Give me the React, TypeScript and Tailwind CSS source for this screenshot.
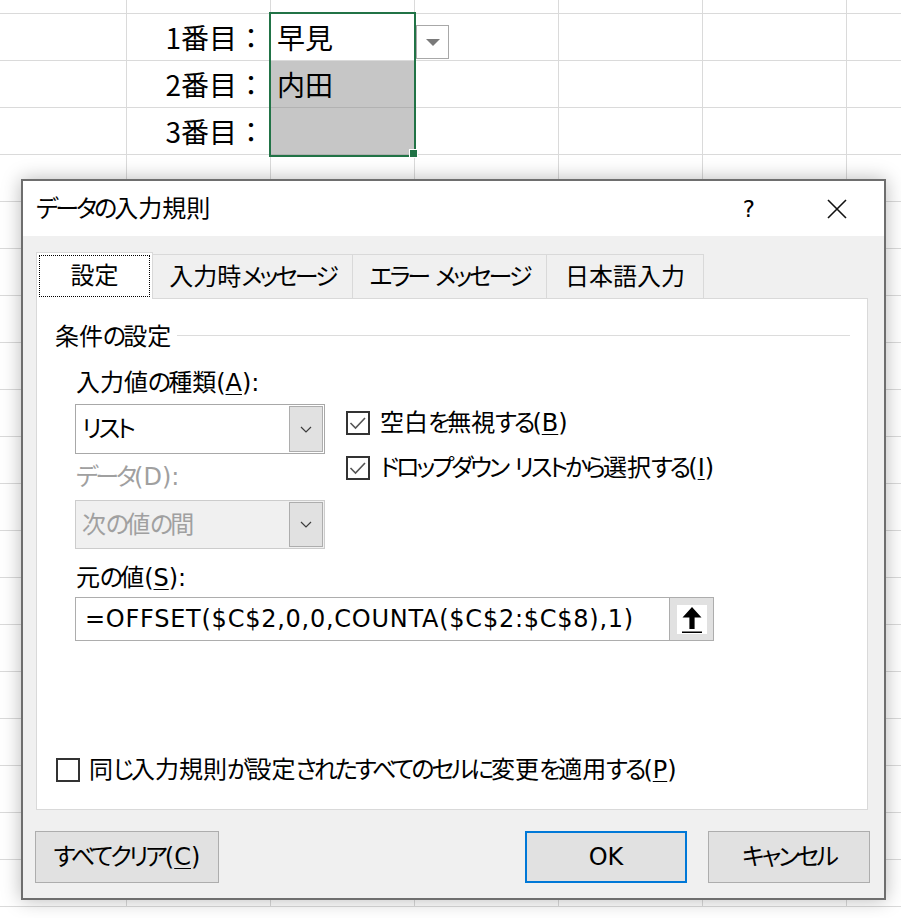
import React from "react";

function J({ t }: { t: string }) {
  const parts = t.split(/([\u3041-\u30ff]+| )/);
  return (
    <>
      {parts.map((p, i) =>
        p === " " ? (
          <span key={i} className="inline-block w-[7px]" />
        ) : /[\u3041-\u30ff]/.test(p) ? (
          <span key={i} className="tracking-[-3px]">
            {p}
          </span>
        ) : (
          <React.Fragment key={i}>{p}</React.Fragment>
        )
      )}
    </>
  );
}

function U({ c }: { c: string }) {
  return <span className="underline underline-offset-[3px] decoration-1">{c}</span>;
}

function Chevron() {
  return (
    <svg width="12" height="7" viewBox="0 0 12 7">
      <path d="M1 1 L6 6 L11 1" fill="none" stroke="#3c3c3c" strokeWidth="1.2" />
    </svg>
  );
}

function CheckBox({ checked }: { checked: boolean }) {
  return (
    <div className="w-[24px] h-[24px] shrink-0 border-2 border-[#333333] bg-white flex items-center justify-center">
      {checked && (
        <svg width="20" height="20" viewBox="0 0 20 20">
          <path d="M2.5 10 L7.5 15 L17 5" fill="none" stroke="#555555" strokeWidth="1.6" />
        </svg>
      )}
    </div>
  );
}

function EmptyCells() {
  return (
    <>
      <div className="w-[144px] shrink-0 border-r border-b border-[#dadada]" />
      <div className="w-[144px] shrink-0 border-r border-b border-[#dadada]" />
      <div className="w-[144px] shrink-0 border-r border-b border-[#dadada]" />
      <div className="w-[144px] shrink-0 border-r border-b border-[#dadada]" />
    </>
  );
}

function SheetRow({ label, value, gray }: { label?: string; value?: string; gray?: boolean }) {
  return (
    <div className="flex h-[47px] shrink-0">
      <div className="w-[127px] shrink-0 border-r border-b border-[#dadada]" />
      <div className="w-[144px] shrink-0 border-r border-b border-[#dadada] flex items-center justify-end pr-[5px] text-[28px] text-black">
        {label}
      </div>
      {gray ? (
        <div className="w-[144px] shrink-0 border-r border-b border-r-[#dadada] border-b-[#b2b2b2] bg-[#c6c6c6] flex items-center pl-[6px] text-[28px] text-black">
          {value}
        </div>
      ) : (
        <div className="w-[144px] shrink-0 border-r border-b border-[#dadada] flex items-center pl-[6px] text-[28px] text-black">
          {value}
        </div>
      )}
      <EmptyCells />
    </div>
  );
}

export default function App() {
  const rows = [];
  for (let i = 4; i <= 19; i++) rows.push(<SheetRow key={i} />);
  return (
    <div className="relative w-[901px] h-[918px] overflow-hidden bg-white font-['Noto_Sans_CJK_JP',sans-serif]">
      {/* spreadsheet */}
      <div className="flex flex-col">
        <div className="flex h-[14px] shrink-0">
          <div className="w-[127px] shrink-0 border-r border-b border-[#dadada]" />
          <div className="w-[144px] shrink-0 border-r border-b border-[#dadada]" />
          <div className="w-[144px] shrink-0 border-r border-b border-[#dadada]" />
          <EmptyCells />
        </div>
        <SheetRow label="1番目：" value="早見" />
        <SheetRow label="2番目：" value="内田" gray />
        <SheetRow label="3番目：" gray />
        {rows}
      </div>

      {/* selection */}
      <div className="absolute left-[269px] top-[12px] w-[147px] h-[145px] border-2 border-[#217346]" />
      <div className="absolute left-[409px] top-[149px] w-[9px] h-[9px] bg-[#217346] border border-white" />
      {/* in-cell dropdown */}
      <div className="absolute left-[416px] top-[25px] w-[33px] h-[34px] border border-[#a8a8a8] bg-white flex items-center justify-center">
        <svg width="14" height="7" viewBox="0 0 14 7">
          <path d="M0 0 L14 0 L7 7 Z" fill="#7a7a7a" />
        </svg>
      </div>

      {/* dialog */}
      <div className="absolute left-[21px] top-[179px] w-[865px] h-[721px] border-2 border-[#6e6e6e] bg-[#f0f0f0] shadow-[0_0_18px_rgba(0,0,0,0.28)] flex flex-col text-black text-[24px] font-['DejaVu_Sans','Noto_Sans_CJK_JP',sans-serif] [font-feature-settings:'palt']">
        {/* title bar */}
        <div className="h-[55px] shrink-0 bg-white flex items-center pl-[13px] pr-[37px]">
          <span className="leading-[28px]">
            <J t="データの入力規則" />
          </span>
          <span className="ml-auto leading-[28px] text-[23px]">?</span>
          <svg className="ml-[72px]" width="20" height="20" viewBox="0 0 20 20">
            <path d="M1 1 L19 19 M19 1 L1 19" stroke="#111" strokeWidth="1.6" />
          </svg>
        </div>

        {/* body */}
        <div className="flex flex-col pl-[13px] pr-[16px] pt-[16px]">
          {/* tabs */}
          <div className="flex items-end h-[46px]">
            <div className="relative z-10 -mb-[1px] w-[117px] h-[47px] bg-white border-l border-t border-r border-[#d9d9d9] p-[2px]">
              <div className="w-full h-full border border-dotted border-black flex items-center justify-center leading-[28px]">
                設定
              </div>
            </div>
            <div className="w-[200px] h-[44px] border-t border-r border-[#d9d9d9] flex items-center justify-center leading-[28px]">
              <J t="入力時メッセージ" />
            </div>
            <div className="w-[194px] h-[44px] border-t border-r border-[#d9d9d9] flex items-center justify-center leading-[28px]">
              <J t="エラー メッセージ" />
            </div>
            <div className="w-[157px] h-[44px] border-t border-r border-[#d9d9d9] flex items-center justify-center leading-[28px]">
              日本語入力
            </div>
          </div>

          {/* panel */}
          <div className="h-[512px] bg-white border border-[#d9d9d9] flex flex-col">
            <div className="mt-[24px] h-[28px] flex items-center pl-[18px] pr-[17px]">
              <span className="leading-[28px]">
                <J t="条件の設定" />
              </span>
              <div className="flex-1 ml-[6px] h-px bg-[#dcdcdc] -mt-[3px]" />
            </div>

            <div className="pl-[38px] flex flex-col">
              <div className="flex">
                <div className="w-[250px] flex flex-col">
                  <div className="mt-[18px] h-[28px] leading-[28px] pl-[1px]">
                    <J t="入力値の種類" />(<U c="A" />):
                  </div>
                  <div className="mt-[7px] h-[50px] border border-[#a8a8a8] bg-white flex">
                    <div className="flex-1 flex items-center pl-[6px] leading-[28px]">
                      <J t="リスト" />
                    </div>
                    <div className="w-[34px] my-[1px] mr-[1px] bg-[#e1e1e1] border border-[#adadad] flex items-center justify-center">
                      <Chevron />
                    </div>
                  </div>
                  <div className="mt-[9px] h-[28px] leading-[28px] pl-[1px] text-[#a0a0a0]">
                    <J t="データ" />(D):
                  </div>
                  <div className="mt-[9px] h-[49px] border border-[#cccccc] bg-[#f0f0f0] flex">
                    <div className="flex-1 flex items-center pl-[6px] leading-[28px] text-[#a0a0a0]">
                      <J t="次の値の間" />
                    </div>
                    <div className="w-[34px] my-[1px] mr-[1px] bg-[#e1e1e1] border border-[#adadad] flex items-center justify-center">
                      <Chevron />
                    </div>
                  </div>
                </div>
                <div className="ml-[21px] pt-[58px] flex flex-col">
                  <div className="h-[28px] flex items-center">
                    <CheckBox checked />
                    <span className="ml-[10px] leading-[28px]">
                      <J t="空白を無視する" />(<U c="B" />)
                    </span>
                  </div>
                  <div className="mt-[17px] h-[28px] flex items-center">
                    <CheckBox checked />
                    <span className="ml-[10px] leading-[28px]">
                      <J t="ドロップダウン リストから選択する" />(<U c="I" />)
                    </span>
                  </div>
                </div>
              </div>

              <div className="mt-[15px] h-[28px] leading-[28px] pl-[1px]">
                <J t="元の値" />(<U c="S" />):
              </div>
              <div className="mt-[5px] flex h-[44px]">
                <div className="w-[595px] border border-[#adadad] bg-white flex items-center pl-[9px] leading-[28px] tracking-[0.75px]">
                  =OFFSET($C$2,0,0,COUNTA($C$2:$C$8),1)
                </div>
                <div className="w-[45px] -ml-px bg-[#e1e1e1] border border-[#adadad] flex items-center justify-center">
                  <div className="w-[30px] h-[29px] bg-white flex items-center justify-center">
                    <svg width="30" height="29" viewBox="0 0 30 29">
                      <path d="M15 2 L24.5 12.5 L17.6 12.5 L17.6 24 L12.4 24 L12.4 12.5 L5.5 12.5 Z" fill="#000" />
                      <rect x="5" y="26.5" width="20" height="1.5" fill="#000" />
                    </svg>
                  </div>
                </div>
              </div>
            </div>

            <div className="mt-auto mb-[25px] h-[28px] flex items-center pl-[19px]">
              <CheckBox checked={false} />
              <span className="ml-[9px] leading-[28px]">
                <J t="同じ入力規則が設定されたすべてのセルに変更を適用する" />(<U c="P" />)
              </span>
            </div>
          </div>
        </div>

        {/* buttons */}
        <div className="flex mt-[21px] pl-[12px] pr-[14px]">
          <div className="w-[184px] h-[52px] bg-[#e1e1e1] border border-[#adadad] flex items-center justify-center leading-[28px]">
            <J t="すべてクリア" />(<U c="C" />)
          </div>
          <div className="ml-auto w-[162px] h-[52px] bg-[#e1e1e1] border-2 border-[#0078d7] flex items-center justify-center leading-[28px]">
            OK
          </div>
          <div className="ml-[21px] w-[162px] h-[52px] bg-[#e1e1e1] border border-[#adadad] flex items-center justify-center leading-[28px]">
            <J t="キャンセル" />
          </div>
        </div>
      </div>
    </div>
  );
}
